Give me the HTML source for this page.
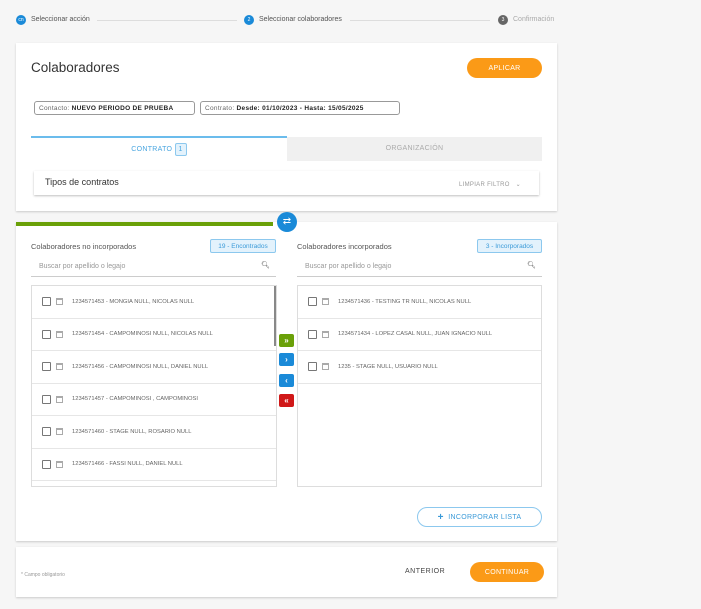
<!DOCTYPE html><html><head><meta charset="utf-8"><style>
*{box-sizing:border-box;margin:0;padding:0}
body{width:701px;height:609px;background:#f6f6f6;font-family:"Liberation Sans",sans-serif;position:relative;overflow:hidden;color:#444}
.a{position:absolute}
.card{position:absolute;background:#fff;box-shadow:0 1px 2px rgba(0,0,0,.18)}
.step{font-size:7px;color:#555;top:16px}
.circ{width:10px;height:10px;border-radius:50%;background:#1a8ad8;color:#fff;font-size:5px;text-align:center;line-height:10px;top:15px}
.line{height:1px;background:#ddd;top:20px}
.chip{border:1px solid #999;border-radius:3px;font-size:6.5px;padding:0 4px;height:14px;top:101px;color:#666;letter-spacing:.3px;display:flex;align-items:center;white-space:pre}
.chip b{color:#222}
.list{position:absolute;border:1px solid #ddd;background:#fff}
.row{height:32.5px;border-bottom:1px solid #e6e6e6;font-size:5.8px;color:#666;display:flex;align-items:center;padding-left:10px}
.cb{width:9px;height:9px;border:1px solid #777;border-radius:1px;margin-right:5px}
.cal{width:7px;height:7px;border:1px solid #aaa;border-top-width:2px;margin-right:9px}
.badge{border:1px solid #8cc8ee;background:#e3f2fc;color:#3a9ad8;font-size:6.5px;border-radius:2px;height:14px;padding:0 3px;top:239px;display:flex;align-items:center;justify-content:center;white-space:nowrap}
.srch{font-size:7px;color:#999;top:263px;border-bottom:1px solid #ccc;height:14px}
.mb{width:15px;height:13px;left:279px;border-radius:2px;color:#fff;font-size:8px;display:flex;align-items:center;justify-content:center;font-weight:bold}
.btn{border-radius:10px;background:#fb9a17;color:#fff;font-size:7px;height:20px;display:flex;align-items:center;justify-content:center;letter-spacing:.3px}
</style></head><body>
<div class="a circ" style="left:16px">cn</div><div class="a step" style="left:31px">Seleccionar acción</div>
<div class="a line" style="left:97px;width:140px"></div>
<div class="a circ" style="left:244px">2</div><div class="a step" style="left:259px">Seleccionar colaboradores</div>
<div class="a line" style="left:350px;width:140px"></div>
<div class="a circ" style="left:498px;background:#666">3</div><div class="a step" style="left:513px;color:#aaa">Confirmación</div>

<div class="card" style="left:16px;top:43px;width:541px;height:168px"></div>
<div class="a" style="left:31px;top:60px;font-size:13.5px;color:#333">Colaboradores</div>
<div class="a btn" style="left:467px;top:58px;width:75px">APLICAR</div>
<div class="a chip" style="left:34px;width:161px">Contacto: <b>NUEVO PERIODO DE PRUEBA</b></div>
<div class="a chip" style="left:200px;width:200px">Contrato: <b>Desde: 01/10/2023 - Hasta: 15/05/2025</b></div>
<div class="a" style="left:31px;top:136px;width:256px;height:25px;border-top:2px solid #6bbcec;font-size:7px;color:#4aa6e0;letter-spacing:.3px;display:flex;align-items:center;justify-content:center">CONTRATO&nbsp;<span style="display:inline-block;border:1px solid #8cc8ee;background:#e3f2fc;border-radius:2px;padding:0 3px;line-height:11px">1</span></div>
<div class="a" style="left:287px;top:137px;width:255px;height:24px;background:#f0f0f0;text-align:center;font-size:7px;color:#aaa;line-height:24px;letter-spacing:.3px">ORGANIZACIÓN</div>
<div class="a" style="left:34px;top:171px;width:505px;height:24px;background:#fff;box-shadow:0 1px 2px rgba(0,0,0,.25)"></div>
<div class="a" style="left:45px;top:177px;font-size:9px;color:#333">Tipos de contratos</div>
<div class="a" style="left:459px;top:181px;font-size:6px;color:#999;letter-spacing:.3px">LIMPIAR FILTRO &nbsp; ⌄</div>

<div class="card" style="left:16px;top:222px;width:541px;height:319px"></div>
<div class="a" style="left:16px;top:222px;width:257px;height:4px;background:#6aa008"></div>
<div class="a" style="left:277px;top:212px;width:20px;height:20px;border-radius:50%;background:#1a8ad8;color:#fff;font-size:10px;text-align:center;line-height:20px">⇄</div>
<div class="a" style="left:31px;top:242px;font-size:7.5px;color:#555">Colaboradores no incorporados</div>
<div class="a badge" style="left:210px;width:66px">19 - Encontrados</div>
<div class="a srch" style="left:31px;width:245px;padding-left:8px">Buscar por apellido o legajo<span style="position:absolute;right:6px;top:-2px;color:#555">🔍︎</span></div>
<div class="list" style="left:31px;top:285px;width:246px;height:202px">
<div class="row"><span class="cb"></span><span class="cal"></span>1234571453 - MONGIA NULL, NICOLAS NULL</div>
<div class="row"><span class="cb"></span><span class="cal"></span>1234571454 - CAMPOMINOSI NULL, NICOLAS NULL</div>
<div class="row"><span class="cb"></span><span class="cal"></span>1234571456 - CAMPOMINOSI NULL, DANIEL NULL</div>
<div class="row"><span class="cb"></span><span class="cal"></span>1234571457 - CAMPOMINOSI , CAMPOMINOSI</div>
<div class="row"><span class="cb"></span><span class="cal"></span>1234571460 - STAGE NULL, ROSARIO NULL</div>
<div class="row"><span class="cb"></span><span class="cal"></span>1234571466 - FASSI NULL, DANIEL NULL</div>
<div class="a" style="right:0;top:0;width:2px;height:60px;background:#888"></div>
</div>
<div class="a mb" style="top:334px;background:#6aa008">»</div>
<div class="a mb" style="top:353px;background:#1a8ad8">›</div>
<div class="a mb" style="top:374px;background:#1a8ad8">‹</div>
<div class="a mb" style="top:394px;background:#d01818">«</div>
<div class="a" style="left:297px;top:242px;font-size:7.5px;color:#555">Colaboradores incorporados</div>
<div class="a badge" style="left:477px;width:65px">3 - Incorporados</div>
<div class="a srch" style="left:297px;width:245px;padding-left:8px">Buscar por apellido o legajo<span style="position:absolute;right:6px;top:-2px;color:#555">🔍︎</span></div>
<div class="list" style="left:297px;top:285px;width:245px;height:202px">
<div class="row"><span class="cb"></span><span class="cal"></span>1234571436 - TESTING TR NULL, NICOLAS NULL</div>
<div class="row"><span class="cb"></span><span class="cal"></span>1234571434 - LOPEZ CASAL NULL, JUAN IGNACIO NULL</div>
<div class="row"><span class="cb"></span><span class="cal"></span>1235 - STAGE NULL, USUARIO NULL</div>
</div>
<div class="a" style="left:417px;top:507px;width:125px;height:20px;border:1px solid #8cc8ee;border-radius:10px;font-size:7px;color:#3a9ad8;letter-spacing:.3px;display:flex;align-items:center;justify-content:center"><b style="font-size:10px">+</b>&nbsp; INCORPORAR LISTA</div>

<div class="card" style="left:16px;top:547px;width:541px;height:50px"></div>
<div class="a" style="left:21px;top:572px;font-size:5px;color:#999">* Campo obligatorio</div>
<div class="a" style="left:405px;top:568px;font-size:7px;color:#444;letter-spacing:.5px">ANTERIOR</div>
<div class="a btn" style="left:470px;top:562px;width:74px">CONTINUAR</div>
</body></html>
